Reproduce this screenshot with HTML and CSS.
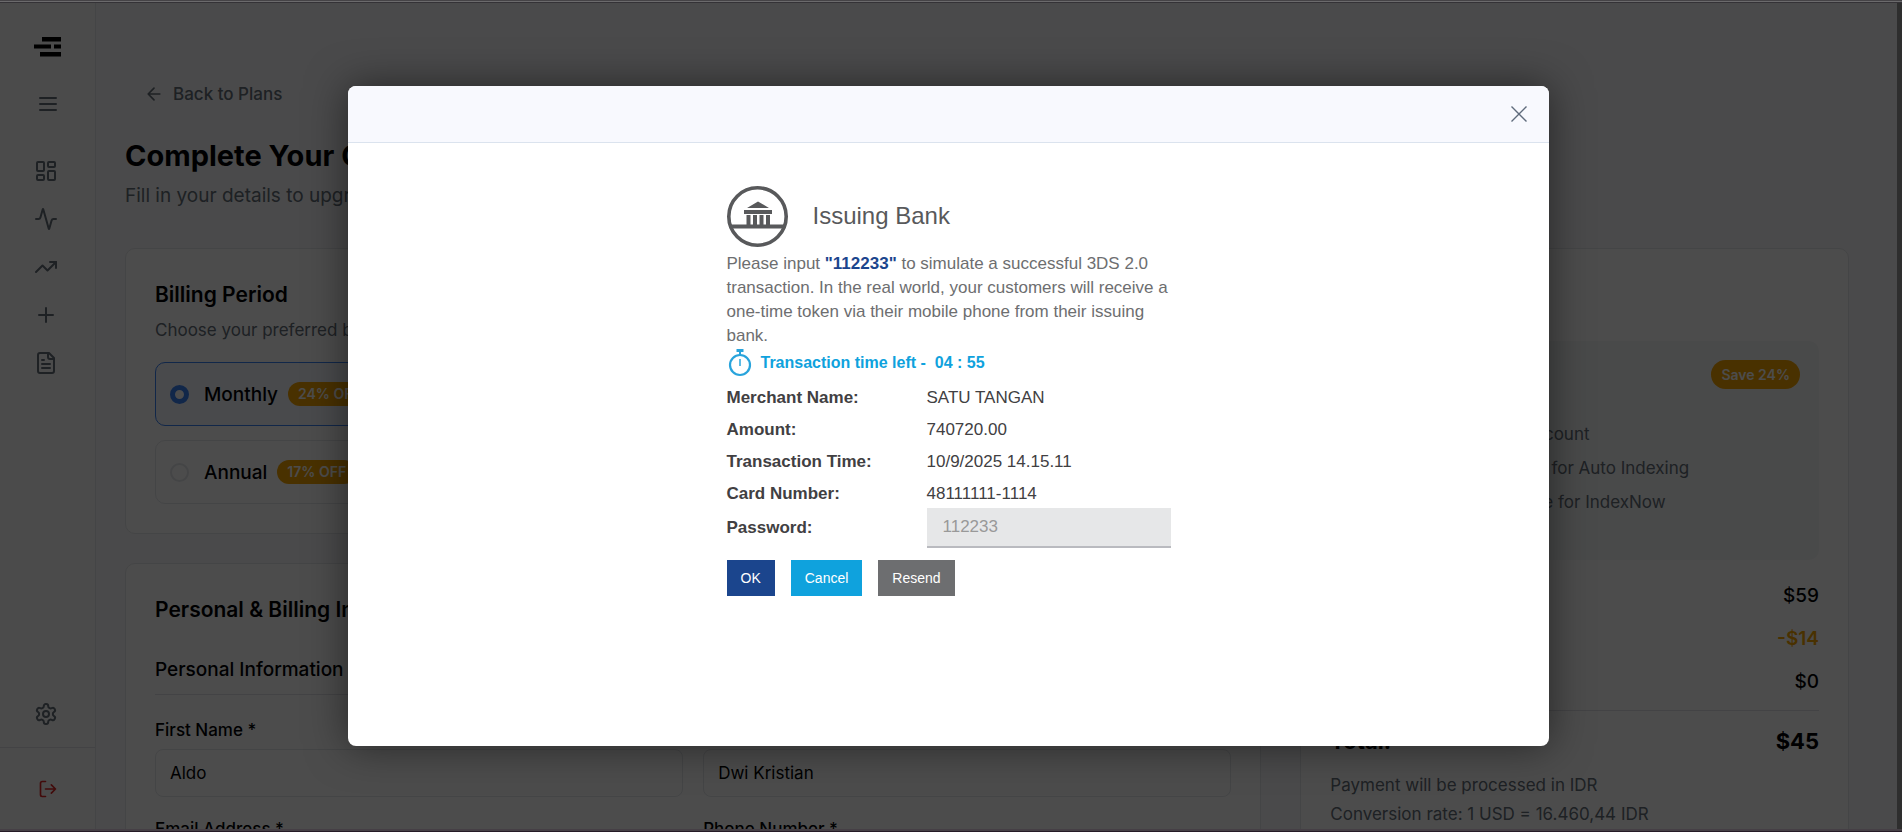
FILE: index.html
```html
<!DOCTYPE html>
<html lang="en">
<head>
<meta charset="utf-8">
<title>Complete Your Order</title>
<link rel="stylesheet" href="styles.css">
</head>
<body>
<div class="edge edge-top"></div>
<div class="viewport">
  <div class="app">
    <aside class="sidebar">
      <a class="logo" href="#" aria-label="Home">
        <svg width="28" height="20" viewBox="0 0 28 20" fill="#000"><path d="M8 0h19v4.500H8zM0 7.500h17v4H0zM20 7.500h7v4H20zM6 15h21v4.500H6z"/></svg>
      </a>
      <button class="side-button menu" aria-label="Menu"><svg class="icon" viewBox="0 0 24 24"><path d="M4 6h16M4 12h16M4 18h16"/></svg></button>
      <nav class="side-nav">
        <a href="#" aria-label="Dashboard"><svg class="icon" viewBox="0 0 24 24"><rect x="3" y="3" width="7" height="9" rx="1"/><rect x="14" y="3" width="7" height="5" rx="1"/><rect x="14" y="12" width="7" height="9" rx="1"/><rect x="3" y="16" width="7" height="5" rx="1"/></svg></a>
        <a href="#" aria-label="Activity"><svg class="icon" viewBox="0 0 24 24"><path d="M22 12h-2.480a2 2 0 0 0-1.930 1.460l-2.350 8.360a.25.25 0 0 1-.48 0L9.240 2.180a.25.25 0 0 0-.48 0l-2.350 8.360A2 2 0 0 1 4.490 12H2"/></svg></a>
        <a href="#" aria-label="Trends"><svg class="icon" viewBox="0 0 24 24"><path d="M22 7l-8.500 8.500-5-5L2 17"/><path d="M16 7h6v6"/></svg></a>
        <a href="#" aria-label="Add"><svg class="icon" viewBox="0 0 24 24"><path d="M5 12h14M12 5v14"/></svg></a>
        <a href="#" aria-label="Documents"><svg class="icon" viewBox="0 0 24 24"><path d="M15 2H6a2 2 0 0 0-2 2v16a2 2 0 0 0 2 2h12a2 2 0 0 0 2-2V7Z"/><path d="M14 2v4a2 2 0 0 0 2 2h4M10 9H8M16 13H8M16 17H8"/></svg></a>
      </nav>
      <a class="settings" href="#" aria-label="Settings"><svg class="icon" viewBox="0 0 24 24"><path d="M12.220 2h-.44a2 2 0 0 0-2 2v.18a2 2 0 0 1-1 1.730l-.43.25a2 2 0 0 1-2 0l-.15-.08a2 2 0 0 0-2.730.73l-.22.38a2 2 0 0 0 .73 2.730l.15.1a2 2 0 0 1 1 1.720v.51a2 2 0 0 1-1 1.740l-.15.09a2 2 0 0 0-.73 2.730l.22.38a2 2 0 0 0 2.730.73l.15-.08a2 2 0 0 1 2 0l.43.25a2 2 0 0 1 1 1.730V20a2 2 0 0 0 2 2h.44a2 2 0 0 0 2-2v-.18a2 2 0 0 1 1-1.730l.43-.25a2 2 0 0 1 2 0l.15.08a2 2 0 0 0 2.730-.73l.22-.39a2 2 0 0 0-.73-2.730l-.15-.08a2 2 0 0 1-1-1.740v-.5a2 2 0 0 1 1-1.740l.15-.09a2 2 0 0 0 .73-2.730l-.22-.38a2 2 0 0 0-2.730-.73l-.15.08a2 2 0 0 1-2 0l-.43-.25a2 2 0 0 1-1-1.730V4a2 2 0 0 0-2-2z"/><circle cx="12" cy="12" r="3"/></svg></a>
      <button class="side-button logout" aria-label="Log out"><svg class="icon icon-small" viewBox="0 0 24 24"><path d="M9 21H5a2 2 0 0 1-2-2V5a2 2 0 0 1 2-2h4M16 17l5-5-5-5M21 12H9"/></svg></button>
    </aside>

    <main class="main">
      <a class="back" href="#"><svg class="icon icon-small" viewBox="0 0 24 24"><path d="M12 19l-7-7 7-7M19 12H5"/></svg>Back to Plans</a>
      <h1>Complete Your Order</h1>
      <p class="lead">Fill in your details to upgrade your plan</p>

      <div class="columns">
        <div class="forms">
          <section class="card">
            <h2>Billing Period</h2>
            <p class="hint">Choose your preferred billing period</p>
            <div class="periods">
              <label class="period selected"><input type="radio" name="period" checked><span>Monthly</span><span class="badge">24% OFF</span></label>
              <label class="period"><input type="radio" name="period"><span>Annual</span><span class="badge">17% OFF</span></label>
            </div>
          </section>
          <section class="card">
            <h2>Personal &amp; Billing Information</h2>
            <h3>Personal Information</h3>
            <div class="fields">
              <div class="field"><label for="first">First Name *</label><input id="first" type="text" value="Aldo"></div>
              <div class="field"><label for="last">Last Name *</label><input id="last" type="text" value="Dwi Kristian"></div>
              <div class="field"><label for="email">Email Address *</label><input id="email" type="email"></div>
              <div class="field"><label for="phone">Phone Number *</label><input id="phone" type="tel"></div>
            </div>
          </section>
        </div>

        <section class="card summary">
          <h2>Order Summary</h2>
          <div class="plan">
            <span class="badge badge-large">Save 24%</span>
            <ul class="features">
              <li>1 Google Search Account</li>
              <li>Unlimited subpages for Auto Indexing</li>
              <li>Unlimited homepage for IndexNow</li>
            </ul>
          </div>
          <dl class="prices">
            <div><dt>Price</dt><dd>$59</dd></div>
            <div class="discount"><dt>Discount</dt><dd>-$14</dd></div>
            <div><dt>Tax</dt><dd>$0</dd></div>
            <div class="total"><dt>Total:</dt><dd>$45</dd></div>
          </dl>
          <p class="note">Payment will be processed in IDR</p>
          <p class="note">Conversion rate: 1 USD = 16.460,44 IDR</p>
        </section>
      </div>
    </main>
  </div>

  <div class="overlay">
    <div class="modal" role="dialog" aria-modal="true" aria-label="Issuing Bank">
      <header class="modal-header">
        <button class="close" aria-label="Close"><svg width="16" height="16" viewBox="0 0 16 16"><path d="M0.500 0.500l15 15M15.500 0.500l-15 15"/></svg></button>
      </header>
      <div class="bank">
        <div class="bank-title">
          <svg width="61" height="61" viewBox="0 0 61 61"><circle cx="30.500" cy="30.500" r="28.700" fill="none" stroke="#58595b" stroke-width="3.600"/><path fill="#58595b" d="M31 15.500L42 22H20zM17 24h28v4H17zM19.500 29h4v10h-4zM26 29h4v10h-4zM32.500 29h4v10h-4zM39 29h4v10h-4zM3 38.500h55v4H3z"/></svg>
          <h4>Issuing Bank</h4>
        </div>
        <p class="bank-text">Please input <strong>"112233"</strong> to simulate a successful 3DS 2.0 transaction. In the real world, your customers will receive a one-time token via their mobile phone from their issuing bank.</p>
        <div class="timer">
          <svg width="24" height="30" viewBox="0 0 24 30" fill="none" stroke="#29a4dc"><circle cx="12" cy="17" r="10" stroke-width="2.200"/><path d="M8.500 2.500h7" stroke-width="3"/><path d="M12 4v3" stroke-width="2"/><path d="M12 11v7" stroke-width="1.500"/></svg>
          <span>Transaction time left -&nbsp; 04 : 55</span>
        </div>
        <form class="bank-form">
          <dl class="details">
            <dt>Merchant Name:</dt><dd>SATU TANGAN</dd>
            <dt>Amount:</dt><dd>740720.00</dd>
            <dt>Transaction Time:</dt><dd>10/9/2025 14.15.11</dd>
            <dt>Card Number:</dt><dd>48111111-1114</dd>
          </dl>
          <div class="password"><label for="otp">Password:</label><input id="otp" type="text" placeholder="112233"></div>
          <div class="actions">
            <button type="button" class="ok">OK</button>
            <button type="button" class="cancel">Cancel</button>
            <button type="button" class="resend">Resend</button>
          </div>
        </form>
      </div>
    </div>
  </div>
  <div class="scrollbar"></div>
</div>
<div class="edge edge-bottom"></div>
</body>
</html>
```
FILE: styles.css
```css
* { box-sizing: border-box; }
body {
  margin: 0;
  height: 100vh;
  display: flex;
  flex-direction: column;
  overflow: hidden;
  background: #2e2e2e;
  font-family: Inter, "Liberation Sans", sans-serif;
  color: #020304;
}
h1, h2, h3, h4, p, dl, dd, ul { margin: 0; padding: 0; }
button { border: 0; background: none; padding: 0; font: inherit; }
a { color: inherit; text-decoration: none; }

.edge { flex: none; height: 3px; }
.edge-top { background: #343236; border-top: 1px solid #454346; box-shadow: inset 0 1px #6b6a6c; }
.edge-bottom { background: #453f45; border-bottom: 1px solid #251b26; }
.viewport { position: relative; flex: 1; min-height: 0; display: flex; }
.app { flex: 1; display: flex; min-width: 0; overflow: hidden; background: #f8f9fa; }
.scrollbar { flex: none; width: 5px; background: #2e2e2e; }

.icon {
  display: block; width: 24px; height: 24px;
  fill: none; stroke: currentColor; stroke-width: 2;
  stroke-linecap: round; stroke-linejoin: round;
}
.icon-small { width: 20px; height: 20px; }

.sidebar {
  flex: none; width: 96px; height: 100%;
  display: flex; flex-direction: column; align-items: center;
  border-right: 1px solid #e5e7eb; background: #fcfcfc; color: #646e78;
  padding-top: 34px;
}
.logo svg { display: block; }
.side-button { color: inherit; }
.menu { margin-top: 35px; }
.side-nav { display: flex; flex-direction: column; gap: 24px; margin: 43px 3px 0 0; }
.settings { margin: auto 3px 21px 0; }
.logout {
  align-self: stretch; height: 82px; border-top: 1px solid #dfe2e6;
  display: flex; align-items: center; justify-content: center; color: #dc2626;
}

.main { flex: 1; min-width: 0; padding: 79px 48px 0 29px; }
.back {
  display: flex; align-items: center; gap: 9px; padding-left: 19px;
  font-size: 17px; line-height: 24px; font-weight: 500; color: #646e78;
}
h1 { margin-top: 32px; font-size: 29px; line-height: 36px; font-weight: 700; }
.lead { margin-top: 8px; font-size: 19px; line-height: 28px; color: #646e78; }
.columns { display: grid; grid-template-columns: repeat(3, 1fr); gap: 39px; margin-top: 38px; align-items: start; }
.forms { grid-column: span 2; display: flex; flex-direction: column; gap: 29px; }
.card { border: 1px solid #e5e7eb; border-radius: 10px; background: #fff; padding: 32px 29px 29px; }
h2 { font-size: 21px; line-height: 28px; font-weight: 600; }
.hint { margin-top: 9px; font-size: 17px; line-height: 24px; color: #646e78; }
.periods { display: flex; flex-direction: column; gap: 14px; margin-top: 20px; }
.period {
  display: flex; align-items: center; height: 64px; padding: 0 14px;
  border: 1px solid #e5e7eb; border-radius: 10px; font-size: 19px; font-weight: 500;
}
.period.selected { border-color: #3b82f6; background: #f3f8ff; }
.period input {
  appearance: none; flex: none; width: 19px; height: 19px; margin: 0 15px 0 0;
  border: 2px solid #e5e7eb; border-radius: 50%; background: #fff;
}
.period input:checked { border: 5px solid #3b82f6; }
.badge {
  margin-left: 10px; padding: 0 10px; border-radius: 15px; background: #f5a300;
  color: #fff; font-size: 14px; line-height: 24px; font-weight: 600;
}
.badge-large { margin: 0; line-height: 29px; }

h3 {
  margin-top: 32px; padding-bottom: 10px; border-bottom: 1px solid #dfe2e6;
  font-size: 19px; line-height: 28px; font-weight: 500;
}
.fields { display: grid; grid-template-columns: 1fr 1fr; gap: 20px; margin-top: 23px; }
.field label { display: block; font-size: 17px; line-height: 24px; font-weight: 500; }
.field input {
  display: block; width: 100%; height: 48px; margin-top: 7px; padding: 0 14px;
  border: 1px solid #e5e7eb; border-radius: 8px; background: #fff;
  font: 17px Inter, sans-serif; color: #020304;
}

.plan {
  display: flex; flex-direction: column; align-items: flex-end;
  height: 219px; margin-top: 32px; padding: 19px; border-radius: 10px; background: #f6f7f8;
}
.features { align-self: stretch; margin-top: 28px; padding-left: 38px; list-style: none; font-size: 17px; line-height: 34px; color: #646e78; }
.prices { margin-top: 14px; font-size: 19px; font-weight: 500; }
.prices > div { display: flex; justify-content: space-between; line-height: 43px; }
.prices .discount { color: #f5a300; }
.prices .discount dd { font-weight: 600; }
.prices .total {
  margin-top: 7px; padding-top: 9px; border-top: 1px solid #dfe2e6;
  font-size: 22px; font-weight: 700;
}
.note { font-size: 17px; line-height: 29px; color: #646e78; }
.prices + .note { margin-top: 8px; }

.overlay {
  position: absolute; inset: 0 5px 0 0;
  display: flex; align-items: center; justify-content: center;
  background: rgba(0, 0, 0, .7);
}
.modal {
  display: flex; flex-direction: column; width: 90%; max-width: 1201px; height: 80%;
  border-radius: 8px; background: #fff; overflow: hidden;
  box-shadow: 0 0 40px rgba(0, 0, 0, .5);
  font-family: "Liberation Sans", Arial, sans-serif;
}
.modal-header {
  flex: none; height: 57px; padding: 0 22px;
  display: flex; align-items: center; justify-content: flex-end;
  border-bottom: 1px solid #dbe3ee; background: #f8f9fe;
}
.close svg { display: block; fill: none; stroke: #5f6b7c; stroke-width: 1.4; }
.bank { width: 444px; max-width: 100%; margin: 43px auto 0; font-size: 17px; line-height: 24px; color: #414042; }
.bank-title { display: flex; align-items: center; gap: 25px; }
h4 { font-size: 24px; line-height: 28px; font-weight: 400; color: #58595b; }
.bank-text { margin-top: 5px; color: #6d6e70; }
.bank-text strong { color: #1b458d; }
.timer { display: flex; align-items: center; gap: 9px; height: 30px; padding-left: 1px; font-size: 16px; font-weight: 700; color: #0fa2dd; }
.details { display: grid; grid-template-columns: 200px 1fr; margin-top: 2px; }
.details dt, .details dd { padding: 6px 0 2px; }
.details dt, .password label { font-weight: 700; }
.password { display: grid; grid-template-columns: 200px 1fr; align-items: center; }
.password input {
  width: 100%; height: 40px; padding: 0 16px; border: 0; border-bottom: 2px solid #b9babf;
  background: #e6e7e8; font: 17px "Liberation Sans", Arial, sans-serif;
}
.password input::placeholder { color: #999; opacity: 1; }
.actions { display: flex; gap: 16px; margin-top: 12px; }
.actions button { height: 36px; padding: 0 14px; font-size: 14px; color: #fff; }
.ok { background: #1b458d; }
.cancel { background: #0fa2dd; }
.resend { background: #6d6e70; }
```
